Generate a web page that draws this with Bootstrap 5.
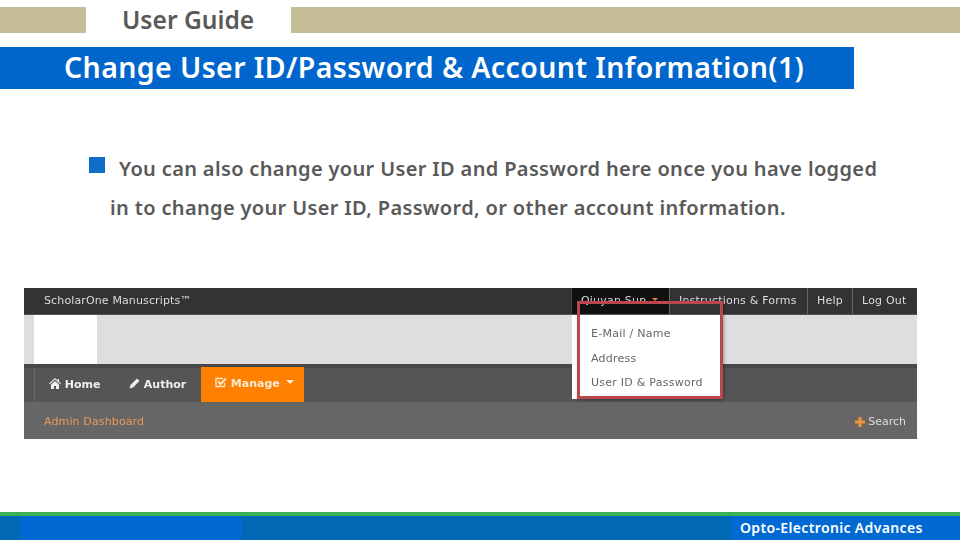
<!DOCTYPE html>
<html lang="en">
<head>
    <meta charset="UTF-8">
    <meta name="viewport" content="width=device-width, initial-scale=1.0">
    <title>User Guide</title>
    <link href="https://cdn.jsdelivr.net/npm/bootstrap@5.3.0/dist/css/bootstrap.min.css" rel="stylesheet">
    <style>
        html, body { height: 540px; overflow: hidden; }
        body { font-family: "Noto Sans", "Open Sans", sans-serif; color: #595959; background: #fff; }
        .slide { width: 960px; height: 540px; }
        .guide-top { height: 26px; margin-top: 7px; }
        .guide-top .tan { background: #c4bd97; }
        .tan-left { width: 86px; }
        .guide-label { width: 205px; font-size: 24.6px; line-height: 26px; font-weight: 600; padding-left: 36px; white-space: nowrap; }
        .title-bar { width: 854px; height: 42px; margin-top: 14px; background: #0066cc; color: #fff; font-size: 28.5px; line-height: 40px; font-weight: 600; padding-left: 64px; letter-spacing: .4px; white-space: nowrap; }
        .intro { height: 199px; padding-top: 65px; font-size: 20px; font-weight: 600; letter-spacing: .35px; white-space: nowrap; }
        .intro-first { line-height: 30px; padding-left: 89px; gap: 14px; }
        .bullet { width: 16px; height: 16px; background: #0f6fc6; margin-top: 3px; }
        .intro-next { line-height: 30px; padding-left: 110px; margin-top: 9px; }
        .shot-wrap { padding-left: 24px; height: 224px; }
        .shot { width: 893px; height: 151px; font-family: "DejaVu Sans", sans-serif; font-size: 11px; filter: blur(.4px); }
        .shot-top { height: 27px; background: #333; color: #ddd; border-bottom: 1px solid #555; }
        .shot-brand { padding-left: 20px; letter-spacing: .13px; }
        .shot-link { height: 26px; line-height: 25px; padding-left: 9px; border-left: 1px solid #666; letter-spacing: .2px; white-space: nowrap; }
        .shot-link.active-user { width: 98px; background: #111; border-left-color: #444; }
        .shot-link.active-user::after { color: #f0803c; margin-left: 6px; }
        .link-forms { width: 138px; }
        .link-help { width: 45px; }
        .link-out { width: 65px; }
        .shot-band { height: 49px; background: #dedede; padding-left: 10px; }
        .shot-logo { width: 63px; background: #fff; }
        .shot-nav { height: 38px; background: #555; padding-left: 10px; border-top: 4px solid #484848; color: #eee; font-weight: 700; }
        .shot-tab { height: 34px; line-height: 34px; white-space: nowrap; }
        .shot-tab svg { vertical-align: -1px; }
        .tab-home { border-left: 1px solid #6a6a6a; padding-left: 14px; width: 95px; }
        .tab-author { width: 72px; }
        .tab-manage { background: #ff7f00; width: 103px; padding-left: 14px; color: #ffe8d0; margin-top: -1px; height: 35px; }
        .tab-manage::after { border-top-width: .4em; border-left-width: .4em; border-right-width: .4em; }
        .shot-sub { height: 37px; background: #666; padding: 3px 11px 0 20px; color: #dddddd; }
        .sub-link { color: #eb9a56; letter-spacing: .13px; }
        .user-menu { left: 548px; top: 27px; width: 150px; height: 84px; background: #fff; color: #666; padding: 7px 0 0 19px; line-height: 24.5px; letter-spacing: .25px; white-space: nowrap; }
        .red-frame { left: 553px; top: 13px; width: 146px; height: 98px; border: 3px solid #b9474d; box-shadow: 1px 1px 3px rgba(0,0,0,.35); }
        .foot-line { height: 4px; background: #3cb054; }
        .foot-bar { height: 24px; background: #0068b5; }
        .foot-left { width: 20px; }
        .foot-mid { width: 222px; background: #006ad2; }
        .foot-gap { width: 489px; }
        .foot-name { background: #006ad2; color: #fff; font-size: 14px; font-weight: 600; line-height: 23px; padding-left: 9px; letter-spacing: .35px; white-space: nowrap; }
    </style>
</head>
<body>
<div class="slide d-flex flex-column">
    <div class="guide-top d-flex">
        <div class="tan tan-left"></div>
        <div class="guide-label">User Guide</div>
        <div class="tan flex-grow-1"></div>
    </div>
    <div class="title-bar">Change User ID/Password &amp; Account Information(1)</div>

    <div class="intro">
        <div class="intro-first d-flex align-items-start">
            <span class="bullet"></span>
            <span>You can also change your User ID and Password here once you have logged</span>
        </div>
        <div class="intro-next">in to change your User ID, Password, or other account information.</div>
    </div>

    <div class="shot-wrap">
        <div class="shot position-relative">
            <div class="shot-top d-flex align-items-center">
                <div class="shot-brand flex-grow-1">ScholarOne Manuscripts™</div>
                <div class="shot-link active-user dropdown-toggle">Qiuyan Sun</div>
                <div class="shot-link link-forms">Instructions &amp; Forms</div>
                <div class="shot-link link-help">Help</div>
                <div class="shot-link link-out">Log Out</div>
            </div>
            <div class="shot-band d-flex"><div class="shot-logo"></div></div>
            <div class="shot-nav d-flex">
                <div class="shot-tab tab-home">
                    <svg width="12" height="11" viewBox="0 0 12 11"><path fill="#eee" d="M6 0 0 5.500l.8.8L6 1.600l5.200 4.700.8-.8-2-1.800V1H8.500v1.400zM2 6.500V11h3V8h2v3h3V6.500L6 3z"/></svg>
                    Home
                </div>
                <div class="shot-tab tab-author">
                    <svg width="11" height="11" viewBox="0 0 11 11"><path fill="#eee" d="M8 0.500 10.500 3 4 9.500 0.500 10.500 1.500 7z"/></svg>
                    Author
                </div>
                <div class="shot-tab tab-manage dropdown-toggle">
                    <svg width="12" height="11" viewBox="0 0 12 11"><path fill="none" stroke="#ffe8d0" stroke-width="1.300" d="M9.500 6v3.500h-8.500v-8h7"/><path fill="none" stroke="#ffe8d0" stroke-width="2" d="M3 4.500 5.500 7 11 1.500"/></svg>
                    Manage
                </div>
            </div>
            <div class="shot-sub d-flex align-items-center justify-content-between">
                <span class="sub-link">Admin Dashboard</span>
                <span>
                    <svg width="10" height="10" viewBox="0 0 10 10"><path fill="#f0923c" d="M3.500 0h3v3.500H10v3H6.500V10h-3V6.500H0v-3h3.500z"/></svg>
                    Search
                </span>
            </div>
            <div class="user-menu position-absolute">
                <div>E-Mail / Name</div>
                <div>Address</div>
                <div>User ID &amp; Password</div>
            </div>
            <div class="red-frame position-absolute"></div>
        </div>
    </div>

    <div class="foot-line"></div>
    <div class="foot-bar d-flex">
        <div class="foot-left"></div>
        <div class="foot-mid"></div>
        <div class="foot-gap"></div>
        <div class="foot-name flex-grow-1">Opto-Electronic Advances</div>
    </div>
</div>
<script src="https://cdn.jsdelivr.net/npm/bootstrap@5.3.0/dist/js/bootstrap.bundle.min.js"></script>
</body>
</html>
